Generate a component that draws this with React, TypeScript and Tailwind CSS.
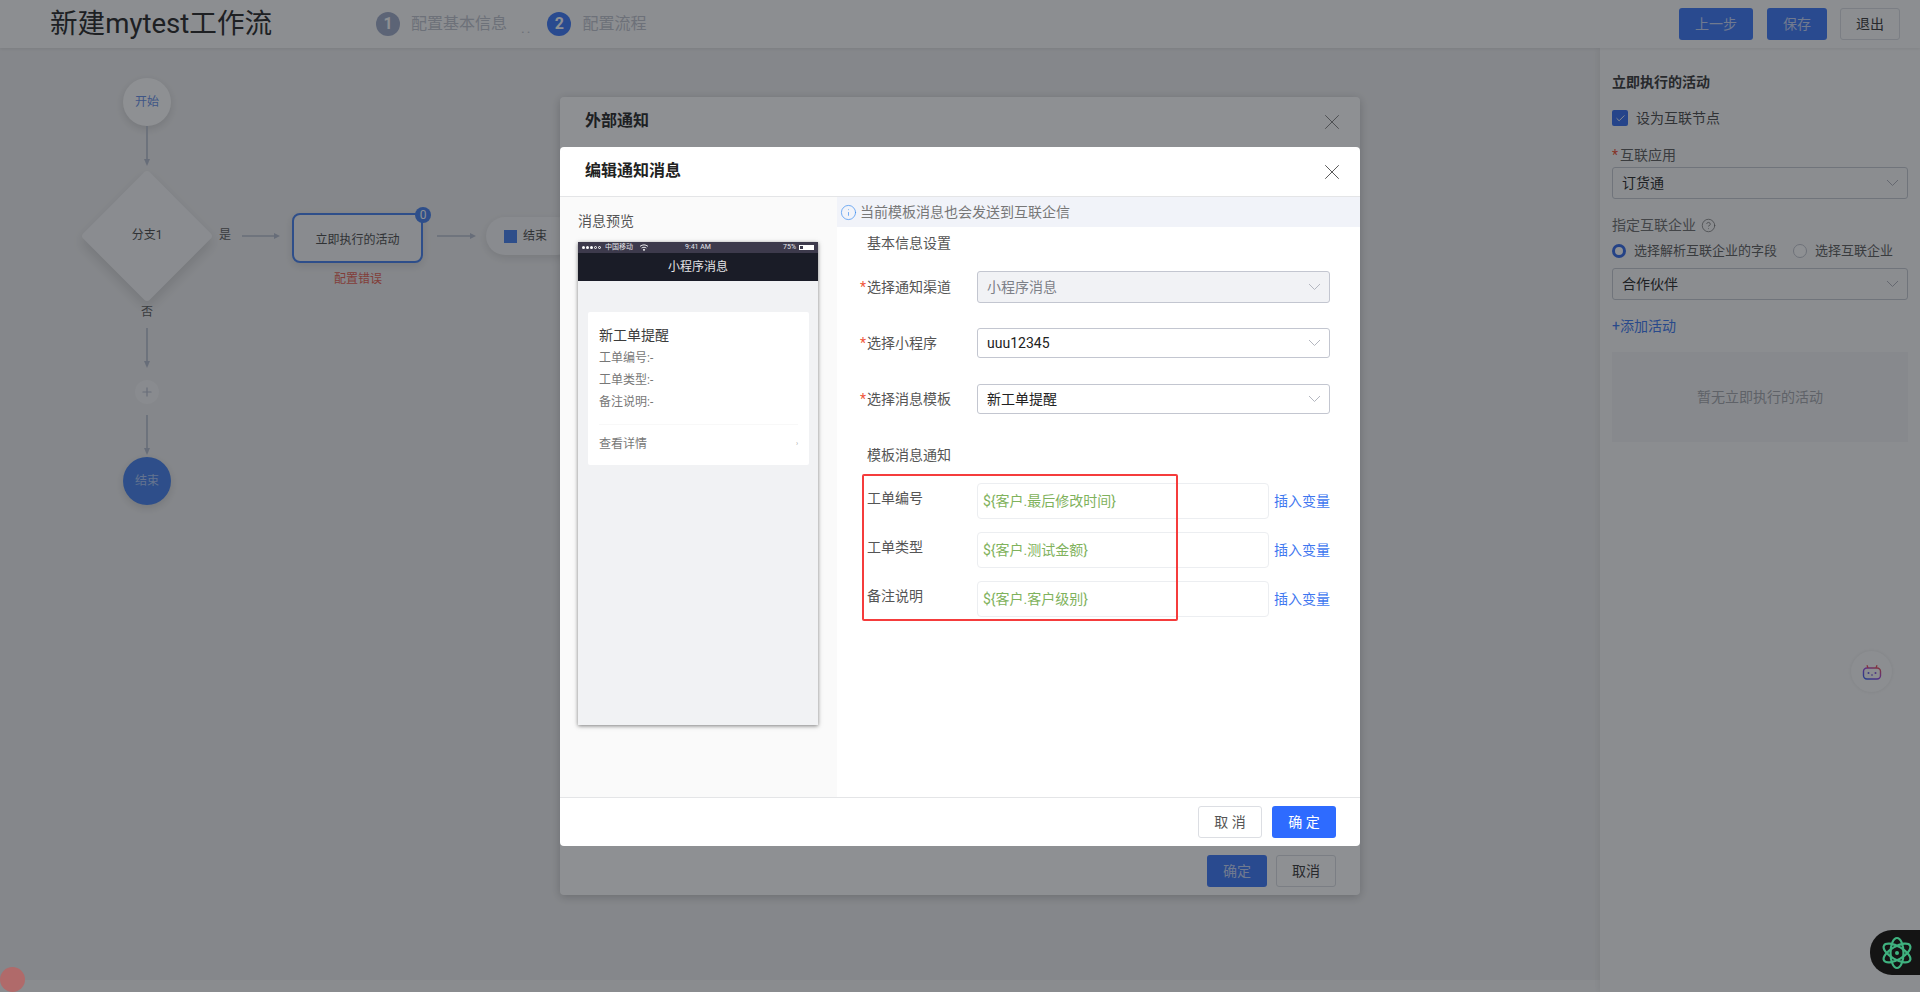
import { Check, CircleHelp, Info, Plus, X } from 'lucide-react';

const FONT = 'font-["Roboto","Noto_Sans_CJK_SC",sans-serif]';

function Chevron({ className }: { className?: string }) {
  return (
    <svg width="13" height="8" viewBox="0 0 13 8" fill="none" className={className}>
      <path d="M1 1l5.5 5.5L12 1" stroke="#b4b7c0" strokeWidth="1" />
    </svg>
  );
}

function ArrowDown({ length }: { length: number }) {
  return (
    <svg width="8" height={length} viewBox={`0 0 8 ${length}`} className="block">
      <path d={`M4 0V${length - 5}`} stroke="#b9c0cf" strokeWidth="1.6" />
      <path d={`M1 ${length - 7}L4 ${length}L7 ${length - 7}z`} fill="#b9c0cf" />
    </svg>
  );
}

function ArrowRight({ length }: { length: number }) {
  return (
    <svg width={length} height="8" viewBox={`0 0 ${length} 8`} className="block">
      <path d={`M0 4H${length - 5}`} stroke="#b9c0cf" strokeWidth="1.6" />
      <path d={`M${length - 6} 1L${length} 4L${length - 6} 7z`} fill="#b9c0cf" />
    </svg>
  );
}

function PanelSelect({ value }: { value: string }) {
  return (
    <div className="flex h-[32px] w-[296px] items-center justify-between rounded-[3px] border border-[#c9ccd4] pl-[9px] pr-[8px] text-[14px] text-[#333]">
      <span>{value}</span>
      <Chevron />
    </div>
  );
}

function Radio({ on, label }: { on?: boolean; label: string }) {
  return (
    <span className="flex items-center gap-[8px] text-[13px] text-[#666]">
      <span
        className={
          on
            ? 'h-[14px] w-[14px] rounded-full border-[3.5px] border-[#3f72e8] bg-white'
            : 'h-[14px] w-[14px] rounded-full border border-[#c4c7cf] bg-white'
        }
      />
      {label}
    </span>
  );
}

function SideButton({ children, width, primary }: { children: string; width: string; primary?: boolean }) {
  return (
    <span
      className={`flex h-[32px] items-center justify-center rounded-[3px] text-[14px] ${width} ${
        primary ? 'bg-[#4880f8] text-[#c9d7f8]' : 'border border-[#dcdee3] text-[#444]'
      }`}
    >
      {children}
    </span>
  );
}

function FormSelect({ label, value, disabled, height, className }: {
  label: string;
  value: string;
  disabled?: boolean;
  height: string;
  className: string;
}) {
  return (
    <div className={`flex items-center ${className}`}>
      <div className="w-[117px] text-[14px] text-[#555]">
        <span className="inline-block w-[7px] text-[#f0563a]">*</span>
        {label}
      </div>
      <div
        className={`flex w-[353px] items-center justify-between rounded-[3px] border border-[#c3c6d0] pl-[9px] pr-[8px] text-[14px] ${height} ${
          disabled ? 'bg-[#f1f2f5] text-[#7d8087]' : 'bg-white text-[#222]'
        }`}
      >
        <span>{value}</span>
        <Chevron />
      </div>
    </div>
  );
}

function TemplateRow({ label, value, className }: { label: string; value: string; className: string }) {
  return (
    <div className={`flex ${className}`}>
      <div className="w-[117px] pl-[7px] pt-[4px] text-[14px] leading-[22px] text-[#555]">{label}</div>
      <div className="flex h-[36px] w-[292px] items-center rounded-[4px] border border-[#eceef1] pl-[5px] text-[14px] text-[#7fb25c]">
        {value}
      </div>
      <div className="ml-[5px] flex h-[36px] items-center whitespace-nowrap pt-[1px] text-[14px] text-[#3f78f0]">插入变量</div>
    </div>
  );
}

function PhonePreview() {
  return (
    <div className="flex h-[483px] w-[240px] flex-col bg-[#f1f2f4] shadow-[0_1px_4px_rgba(0,0,0,0.5)]">
      <div className="flex h-[11px] items-center bg-[#3d3a4c] px-[4px] text-[7px] leading-none text-[#e6e6ea]">
        <div className="flex flex-1 items-center">
          <span className="flex gap-[1px]">
            <i className="h-[3px] w-[3px] rounded-full bg-white" />
            <i className="h-[3px] w-[3px] rounded-full bg-white" />
            <i className="h-[3px] w-[3px] rounded-full bg-white" />
            <i className="h-[3px] w-[3px] rounded-full border-[0.5px] border-white" />
            <i className="h-[3px] w-[3px] rounded-full border-[0.5px] border-white" />
          </span>
          <span className="ml-[4px]">中国移动</span>
          <svg width="10" height="7" viewBox="0 0 10 7" className="ml-[6px]" fill="none" stroke="#fff" strokeWidth="0.9">
            <path d="M1 2.4C3.5.4 6.5.4 9 2.4M2.6 4C4 3 6 3 7.4 4" />
            <circle cx="5" cy="5.8" r=".6" fill="#fff" />
          </svg>
        </div>
        <span>9:41 AM</span>
        <div className="flex flex-1 items-center justify-end">
          <span className="mr-[3px]">75%</span>
          <span className="h-[5px] w-[15px] border-[0.5px] border-white pl-[3px]">
            <span className="block h-full bg-white" />
          </span>
        </div>
      </div>
      <div className="flex h-[28px] items-center justify-center bg-[#1a1c27] text-[12px] text-[#e4e4e6]">小程序消息</div>
      <div className="mx-[10px] mt-[31px] flex h-[153px] w-[221px] flex-col rounded-[2px] bg-white px-[11px]">
        <div className="mt-[13px] text-[14px] leading-[20px] text-[#3c3c3c]">新工单提醒</div>
        <div className="mt-[2px] text-[12px] leading-[22px] text-[#777]">工单编号:-</div>
        <div className="text-[12px] leading-[22px] text-[#777]">工单类型:-</div>
        <div className="text-[12px] leading-[22px] text-[#777]">备注说明:-</div>
        <div className="mt-[11px] border-t border-[#f8f8f8] pt-[9px] leading-[20px]">
          <div className="flex items-center justify-between text-[12px] text-[#777]">
            <span>查看详情</span>
            <span className="text-[7px] text-[#aaa]">›</span>
          </div>
        </div>
      </div>
    </div>
  );
}

export default function App() {
  return (
    <div className={`relative h-[992px] w-[1920px] overflow-hidden bg-[#f8f8f8] ${FONT}`}>
      <header className="relative z-[1] flex h-[48px] items-center bg-[#fbfbfb] pl-[50px] pr-[20px] shadow-[0_1px_3px_rgba(0,0,0,0.08)]">
        <h1 className="w-[221px] whitespace-nowrap text-[27.6px] font-normal text-[#333]">新建mytest工作流</h1>
        <div className="ml-[105px] flex items-center text-[16px] text-[#c4c7d0]">
          <span className="flex h-[24px] w-[24px] items-center justify-center rounded-full bg-[#a4afcb] text-[16px] font-bold text-white">1</span>
          <span className="ml-[11px]">配置基本信息</span>
          <span className="ml-[14px] mt-[8px] text-[14px] tracking-[2px]">..</span>
          <span className="ml-[15px] flex h-[24px] w-[24px] items-center justify-center rounded-full bg-[#4880f8] text-[16px] font-bold text-white">2</span>
          <span className="ml-[11px]">配置流程</span>
        </div>
        <div className="ml-auto flex items-center">
          <SideButton width="w-[74px]" primary>上一步</SideButton>
          <span className="ml-[14px]"><SideButton width="w-[60px]" primary>保存</SideButton></span>
          <span className="ml-[13px]"><SideButton width="w-[60px]">退出</SideButton></span>
        </div>
      </header>

      <div className="flex h-[944px]">
        <div className="flex h-[932px] flex-1 flex-col">
          <main className="relative h-full bg-[#efeff0] text-[12px]">
            <div className="absolute left-[123px] top-[30px] flex h-[48px] w-[48px] items-center justify-center rounded-full bg-white text-[#6f96e8] shadow-[0_3px_8px_rgba(0,0,0,0.12)]">开始</div>
            <div className="absolute left-[143px] top-[78px]"><ArrowDown length={40} /></div>
            <div className="absolute left-[100px] top-[141px] h-[94px] w-[94px] rotate-45 rounded-[4px] bg-[#f8f8f9] shadow-[4px_4px_12px_rgba(0,0,0,0.12)]" />
            <div className="absolute left-[82px] top-[122px] flex h-[130px] w-[130px] items-center justify-center text-[#555]">分支1</div>
            <div className="absolute left-[219px] top-[178px] text-[#666]">是</div>
            <div className="absolute left-[242px] top-[184px]"><ArrowRight length={38} /></div>
            <div className="absolute left-[292px] top-[165px] flex h-[50px] w-[131px] items-center justify-center rounded-[8px] border-2 border-[#5088ee] bg-[#f6f6f7] pt-[3px] text-[#555] shadow-[0_3px_8px_rgba(0,0,0,0.1)]">立即执行的活动</div>
            <div className="absolute left-[415px] top-[159px] flex h-[16px] w-[16px] items-center justify-center rounded-full bg-[#5088ee] text-[12px] text-white">0</div>
            <div className="absolute left-[334px] top-[222px] text-[#e86a5c]">配置错误</div>
            <div className="absolute left-[437px] top-[184px]"><ArrowRight length={39} /></div>
            <div className="absolute left-[486px] top-[169px] flex h-[38px] w-[90px] items-center rounded-full bg-[#f6f6f7] pl-[18px] text-[#555] shadow-[0_3px_8px_rgba(0,0,0,0.1)]">
              <span className="h-[13px] w-[13px] bg-[#5088ee]" />
              <span className="ml-[6px]">结束</span>
            </div>
            <div className="absolute left-[141px] top-[255px] text-[#666]">否</div>
            <div className="absolute left-[143px] top-[280px]"><ArrowDown length={40} /></div>
            <div className="absolute left-[135px] top-[332px] flex h-[24px] w-[24px] items-center justify-center rounded-full bg-[#f6f6f7] text-[#b9c0cf]">
              <Plus size={14} strokeWidth={2} />
            </div>
            <div className="absolute left-[143px] top-[367px]"><ArrowDown length={40} /></div>
            <div className="absolute left-[123px] top-[409px] flex h-[48px] w-[48px] items-center justify-center rounded-full bg-[#5088ee] text-[#b3cbf8] shadow-[0_3px_8px_rgba(0,0,0,0.12)]">结束</div>
          </main>
        </div>

        <aside className="relative h-full w-[320px] bg-[#fafafa] px-[12px] pt-[26px] shadow-[-2px_0_6px_rgba(0,0,0,0.06)]">
          <div className="text-[14px] font-bold leading-[16px] text-[#444]">立即执行的活动</div>
          <div className="mt-[20px] flex h-[16px] items-center">
            <span className="flex h-[16px] w-[16px] items-center justify-center rounded-[2px] bg-[#4176ee] text-white">
              <Check size={11} strokeWidth={2} />
            </span>
            <span className="ml-[8px] text-[14px] text-[#555]">设为互联节点</span>
          </div>
          <div className="mt-[19px] text-[14px] leading-[20px] text-[#666]">
            <span className="inline-block w-[8px] text-[#f0563a]">*</span>互联应用
          </div>
          <div className="mt-[2px]"><PanelSelect value="订货通" /></div>
          <div className="mt-[16px] flex h-[20px] items-center text-[14px] text-[#777]">
            指定互联企业
            <CircleHelp size={15} strokeWidth={1.2} className="ml-[5px]" />
          </div>
          <div className="mt-[6px] flex h-[20px] items-center gap-[16px]">
            <Radio on label="选择解析互联企业的字段" />
            <Radio label="选择互联企业" />
          </div>
          <div className="mt-[7px]"><PanelSelect value="合作伙伴" /></div>
          <div className="mt-[16px] text-[14px] leading-[20px] text-[#4880f0]">+添加活动</div>
          <div className="mt-[16px] flex h-[90px] w-[296px] items-center justify-center bg-[#f3f3f4] text-[14px] text-[#a9abb1]">暂无立即执行的活动</div>
          <div className="absolute left-[251px] top-[603px] flex h-[41px] w-[41px] items-center justify-center rounded-full bg-[#fbfbfb] shadow-[0_0_4px_rgba(0,0,0,0.08)]">
            <svg width="20" height="16" viewBox="0 0 20 16" fill="none">
              <defs>
                <linearGradient id="bot" x1="0" y1="1" x2="1" y2="0">
                  <stop offset="0" stopColor="#3d6df0" />
                  <stop offset="0.55" stopColor="#a64fe0" />
                  <stop offset="1" stopColor="#f05a5a" />
                </linearGradient>
              </defs>
              <rect x="1.5" y="4" width="17" height="11" rx="3.5" stroke="url(#bot)" strokeWidth="1.4" />
              <path d="M6 4L5 1.2M14 4l1-2.8" stroke="#ee5566" strokeWidth="1.3" />
              <circle cx="6.5" cy="9" r="1" fill="#6b62e0" />
              <circle cx="13.5" cy="9" r="1" fill="#8a5ce0" />
              <path d="M9 11h2" stroke="#7a5ce0" strokeWidth="1" />
            </svg>
          </div>
        </aside>
      </div>

      {/* back dialog, still under the mask */}
      <div className="absolute left-[560px] top-[97px] flex h-[798px] w-[800px] flex-col rounded-[4px] bg-white shadow-[0_2px_10px_rgba(0,0,0,0.2)]">
        <div className="flex h-[50px] items-center justify-between pl-[25px] pr-[15px]">
          <span className="mb-[2px] text-[16px] font-bold text-[#333]">外部通知</span>
          <X size={26} strokeWidth={0.9} className="text-[#888]" />
        </div>
        <div className="mt-auto mb-[8px] flex justify-end gap-[9px] pr-[24px]">
          <SideButton width="w-[60px]" primary>确定</SideButton>
          <SideButton width="w-[60px]">取消</SideButton>
        </div>
      </div>

      <div className="absolute inset-0 z-[2] bg-[rgba(5,8,16,0.45)]" />

      <div className="absolute bottom-0 left-0 z-[3] h-[25px] w-[25px] rounded-full bg-[#b06a6a]" />
      <div className="absolute bottom-[17px] right-0 z-[3] flex h-[45px] w-[50px] items-center rounded-l-[22px] bg-[#141414] pl-[11px]">
        <svg width="32" height="34" viewBox="-16 -17 32 34" fill="none" stroke="#3fb27f" strokeWidth="2.2">
          <ellipse rx="6.5" ry="15" />
          <ellipse rx="6.5" ry="15" transform="rotate(60)" />
          <ellipse rx="6.5" ry="15" transform="rotate(120)" />
          <circle r="2" fill="#3fb27f" stroke="none" />
        </svg>
      </div>

      {/* front dialog */}
      <div className="absolute left-[560px] top-[147px] z-[3] flex h-[699px] w-[800px] flex-col rounded-[4px] bg-white">
        <div className="flex h-[50px] shrink-0 items-center justify-between border-b border-[#e4e5e7] pl-[25px] pr-[15px]">
          <span className="mb-[2px] text-[16px] font-bold text-[#222]">编辑通知消息</span>
          <X size={26} strokeWidth={0.9} className="text-[#555]" />
        </div>
        <div className="relative flex h-[600px]">
          <div className="w-[277px] bg-[#fafafa] pl-[18px] pt-[14px]">
            <div className="text-[14px] leading-[20px] text-[#555]">消息预览</div>
            <div className="mt-[11px]"><PhonePreview /></div>
          </div>
          <div className="flex-1">
            <div className="flex h-[30px] items-center bg-[#f1f3f9] pl-[3px] text-[14px] text-[#777]">
              <Info size={17} strokeWidth={1} className="text-[#3f8df0]" />
              <span className="ml-[3px]">当前模板消息也会发送到互联企信</span>
            </div>
            <div className="pl-[23px]">
              <div className="mt-[5px] pl-[7px] text-[14px] leading-[22px] text-[#555]">基本信息设置</div>
              <FormSelect className="mt-[17px]" height="h-[32px]" label="选择通知渠道" value="小程序消息" disabled />
              <FormSelect className="mt-[25px]" height="h-[30px]" label="选择小程序" value="uuu12345" />
              <FormSelect className="mt-[26px]" height="h-[30px]" label="选择消息模板" value="新工单提醒" />
              <div className="mt-[30px] pl-[7px] text-[14px] leading-[22px] text-[#555]">模板消息通知</div>
              <TemplateRow className="mt-[17px]" label="工单编号" value="${客户.最后修改时间}" />
              <TemplateRow className="mt-[13px]" label="工单类型" value="${客户.测试金额}" />
              <TemplateRow className="mt-[13px]" label="备注说明" value="${客户.客户级别}" />
            </div>
          </div>
          <div className="absolute left-[302px] top-[277px] h-[147px] w-[316px] rounded-[2px] border-2 border-[#f53c3c]" />
        </div>
        <div className="flex flex-1 items-center justify-end gap-[10px] border-t border-[#e4e5e7] pr-[24px]">
          <span className="flex h-[32px] w-[64px] items-center justify-center whitespace-pre rounded-[3px] border border-[#dcdee3] text-[14px] text-[#555]">取 消</span>
          <span className="flex h-[32px] w-[64px] items-center justify-center whitespace-pre rounded-[3px] bg-[#2e6bff] text-[14px] text-white">确 定</span>
        </div>
      </div>
    </div>
  );
}
